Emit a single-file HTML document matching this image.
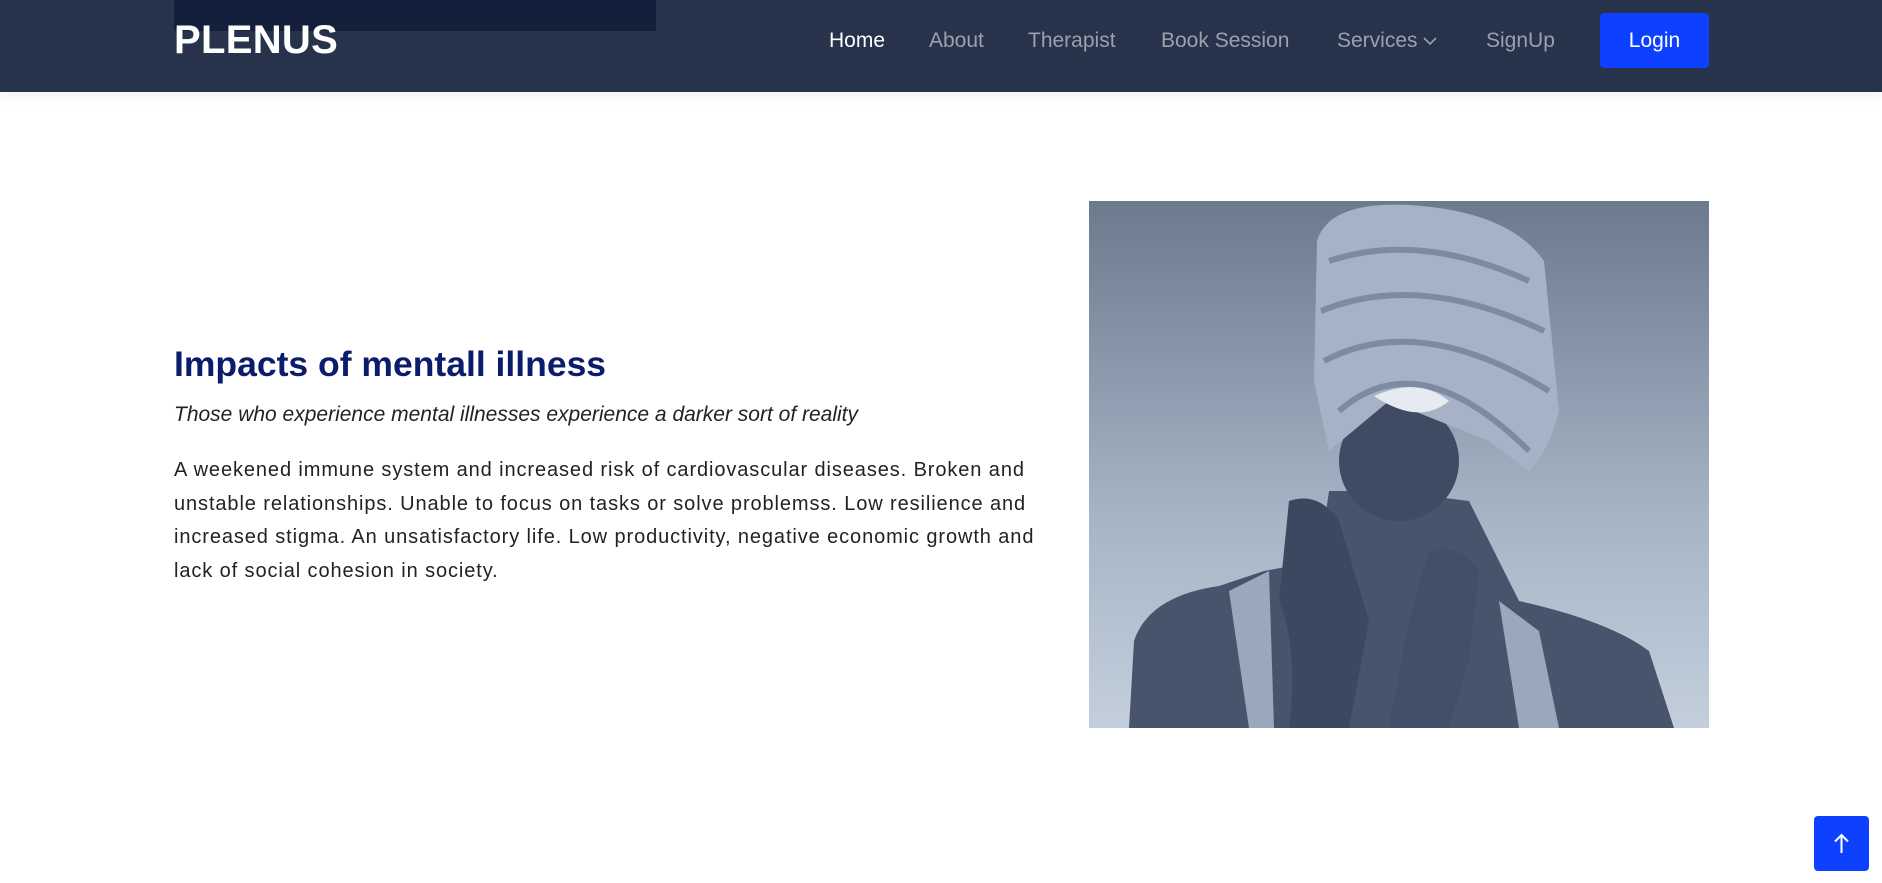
<!DOCTYPE html>
<html><head><meta charset="utf-8"><style>
*{margin:0;padding:0;box-sizing:border-box}
body{width:1882px;height:883px;background:#fff;font-family:"Liberation Sans",sans-serif;position:relative;overflow:hidden}
.hdr{position:absolute;left:0;top:0;width:1882px;height:92px;background:#27334a;box-shadow:0 2px 14px rgba(0,0,0,.08)}
.blk{position:absolute;left:174px;top:0;width:482px;height:31px;background:#141f3b}
.logo{position:absolute;left:174px;top:18px;color:#fff;font-weight:bold;font-size:40px;letter-spacing:0.3px}
.nav{position:absolute;top:29px;font-size:21px;color:#9aa1ad}
.login{position:absolute;left:1600px;top:13px;width:109px;height:55px;background:#0d41ff;border-radius:4px;color:#fff;font-size:21px;text-align:center;line-height:55px}
h1{position:absolute;left:174px;top:344px;font-size:35.5px;color:#0c1c6d;font-weight:bold}
.sub{position:absolute;left:174px;top:403px;font-size:21px;font-style:italic;color:#222}
.p{position:absolute;left:174px;top:454px;width:900px;font-size:20px;letter-spacing:0.9px;line-height:33.5px;color:#222;white-space:nowrap}
.img{position:absolute;left:1089px;top:201px;width:620px;height:527px}
.top{position:absolute;left:1814px;top:816px;width:55px;height:55px;background:#0d41ff;border-radius:4px}
</style></head><body>
<div class="hdr"><div class="blk"></div><div class="logo">PLENUS</div>
<div class="nav" style="left:829px;color:#fff">Home</div>
<div class="nav" style="left:929px">About</div>
<div class="nav" style="left:1028px">Therapist</div>
<div class="nav" style="left:1161px">Book Session</div>
<div class="nav" style="left:1337px">Services <svg width="14" height="10" viewBox="0 0 14 10" style="vertical-align:middle"><path d="M1 2l6 6 6-6" fill="none" stroke="#9aa1ad" stroke-width="1.6"/></svg></div>
<div class="nav" style="left:1486px">SignUp</div>
<div class="login">Login</div></div>
<h1>Impacts of mentall illness</h1>
<div class="sub">Those who experience mental illnesses experience a darker sort of reality</div>
<div class="p">A weekened immune system and increased risk of cardiovascular diseases. Broken and<br>unstable relationships. Unable to focus on tasks or solve problemss. Low resilience and<br>increased stigma. An unsatisfactory life. Low productivity, negative economic growth and<br>lack of social cohesion in society.</div>
<svg class="img" viewBox="0 0 620 527">
<defs><linearGradient id="bg" x1="0" y1="0" x2="0" y2="1"><stop offset="0" stop-color="#6c7a8e"/><stop offset="0.6" stop-color="#a6b4c6"/><stop offset="1" stop-color="#c3cfdc"/></linearGradient></defs>
<rect width="620" height="527" fill="url(#bg)"/>
<path d="M40 527 L45 440 Q60 395 130 385 L175 370 L230 360 L240 290 L300 290 L380 300 L430 400 Q520 420 560 450 L585 527Z" fill="#48546c"/>
<path d="M140 390 L180 370 L185 527 L160 527Z M410 400 L450 430 L470 527 L430 527Z" fill="#9ba8bb"/>
<path d="M200 300 Q230 290 250 320 L280 420 L260 527 L200 527 Q210 450 190 400Z" fill="#3c4760"/>
<path d="M340 350 Q370 340 390 370 L380 460 L360 527 L300 527 L320 420Z" fill="#434f68"/>
<ellipse cx="310" cy="260" rx="60" ry="60" fill="#3f4b63"/>
<path d="M228 40 Q240 0 320 4 Q420 10 455 60 L470 210 Q460 250 440 270 L400 240 L300 200 L240 250 L225 180Z" fill="#a6b3c6"/>
<path d="M240 60 Q330 30 440 80 M232 110 Q330 70 455 130 M235 160 Q330 110 460 190 M250 210 Q330 140 440 250" stroke="#7d8aa0" stroke-width="6" fill="none"/>
<path d="M285 195 Q330 175 360 200 Q330 225 285 195Z" fill="#e6ebf1"/>
</svg>
<div class="top"><svg width="55" height="55" viewBox="0 0 55 55"><path d="M27.5 19v18M21 25.5l6.5-6.5 6.5 6.5" fill="none" stroke="#fff" stroke-width="2"/></svg></div>
</body></html>
